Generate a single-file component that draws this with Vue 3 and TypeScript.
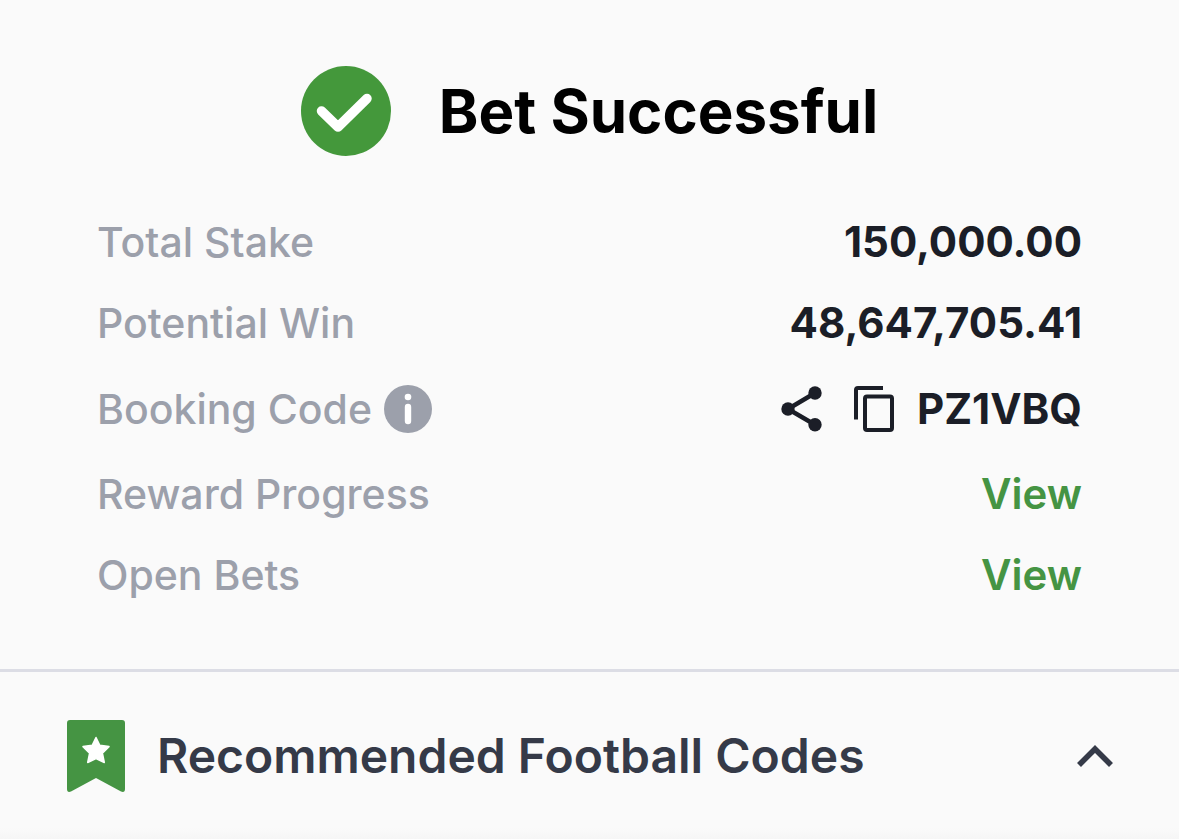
<script setup lang="ts">
interface Row {
  label: string
  value: string
  kind: 'text' | 'code' | 'link'
}

const rows: Row[] = [
  { label: 'Total Stake', value: '150,000.00', kind: 'text' },
  { label: 'Potential Win', value: '48,647,705.41', kind: 'text' },
  { label: 'Booking Code', value: 'PZ1VBQ', kind: 'code' },
  { label: 'Reward Progress', value: 'View', kind: 'link' },
  { label: 'Open Bets', value: 'View', kind: 'link' },
]
</script>

<template>
  <main class="page">
    <header class="title">
      <svg class="check" viewBox="0 0 90 90" aria-hidden="true">
        <circle cx="45" cy="45" r="45" fill="#44983b" />
        <path d="M20.5 45L37 61l29-28.500" fill="none" stroke="#fff" stroke-width="9.500" stroke-linecap="round" stroke-linejoin="round" />
      </svg>
      <h1>Bet Successful</h1>
    </header>

    <dl class="rows">
      <div v-for="row in rows" :key="row.label" class="row" :class="row.kind">
        <dt>
          {{ row.label }}
          <button v-if="row.kind === 'code'" class="icon" type="button" aria-label="About booking codes">
            <svg width="48" height="48" viewBox="0 0 48 48">
              <circle cx="24" cy="24" r="24" fill="#9ca0ab" />
              <circle cx="24" cy="12" r="3.3" fill="#fff" />
              <path d="M24 22v14" fill="none" stroke="#fff" stroke-width="6.400" stroke-linecap="round" />
            </svg>
          </button>
        </dt>
        <dd>
          <template v-if="row.kind === 'code'">
            <button class="icon" type="button" aria-label="Share">
              <svg width="42" height="48" viewBox="0 0 42 48">
                <path d="M34 8L7 24l27 15.700" fill="none" stroke="#1b1e27" stroke-width="4.500" />
                <circle cx="34" cy="8" r="6.700" fill="#1b1e27" />
                <circle cx="7" cy="24" r="6.700" fill="#1b1e27" />
                <circle cx="34" cy="39.700" r="6.700" fill="#1b1e27" />
              </svg>
            </button>
            <button class="icon copy" type="button" aria-label="Copy">
              <svg width="42" height="48" viewBox="0 0 42 48">
                <path d="M3 34.500V5q0-2 2-2h25" fill="none" stroke="#1b1e27" stroke-width="4" />
                <rect x="12" y="11.500" width="27" height="33.500" rx="2" fill="none" stroke="#1b1e27" stroke-width="4" />
              </svg>
            </button>
          </template>
          <a v-if="row.kind === 'link'" href="#">{{ row.value }}</a>
          <span v-else>{{ row.value }}</span>
        </dd>
      </div>
    </dl>

    <section class="codes">
      <svg width="58" height="72" viewBox="0 0 58 72" aria-hidden="true">
        <path d="M3 0h52q3 0 3 3v66q0 4-4 2.600L29 58 4 71.600Q0 73 0 69V3q0-3 3-3z" fill="#459443" />
        <path d="M29 17.500l3.800 7.800 9.200 1.300-6.600 6.500 1.900 9.400L29 38.600l-8.300 3.900 1.900-9.400-6.600-6.500 9.200-1.300z" fill="#fff" stroke="#fff" stroke-width="1.500" stroke-linejoin="round" />
      </svg>
      <h2>Recommended Football Codes</h2>
      <button class="icon" type="button" aria-label="Collapse" aria-expanded="true">
        <svg width="36" height="24" viewBox="0 0 36 24">
          <path d="M2 21L18 5l16 16" fill="none" stroke="#353a48" stroke-width="5.600" />
        </svg>
      </button>
    </section>
    <div class="shade"></div>
  </main>
</template>

<style>
body {
  background: #fafafa;
}
</style>

<style scoped>
.page {
  font-family: Inter, "Liberation Sans", sans-serif;
  padding-top: 66px;
}
.title {
  display: flex;
  align-items: center;
  justify-content: center;
  gap: 48px;
}
.check {
  width: 90px;
  height: 90px;
}
h1 {
  margin: 0;
  font-size: 60px;
  line-height: 72px;
  font-weight: 700;
  color: #000;
}
.rows {
  margin: 0;
  padding: 56px 97px 64px;
  display: grid;
  gap: 21px;
}
.row {
  display: flex;
  align-items: center;
  justify-content: space-between;
  font-size: 42px;
  line-height: 60px;
}
.row.code {
  min-height: 69px;
}
dt {
  display: flex;
  align-items: center;
  gap: 12px;
  color: #9ca0ab;
  font-size: 41px;
  font-weight: 500;
}
dd {
  margin: 0;
  display: flex;
  align-items: center;
  color: #1b1e27;
  font-weight: 700;
}
a {
  color: #459443;
  font-weight: 600;
  text-decoration: none;
}
.icon {
  display: flex;
  padding: 0;
  border: 0;
  background: none;
}
.copy {
  margin: 0 22px 0 30px;
}
.codes {
  display: flex;
  align-items: center;
  border-top: 3px solid #dcdde5;
  padding: 48px 66px 36px 67px;
}
h2 {
  flex: 1;
  margin: 0 0 0 32px;
  font-size: 48px;
  line-height: 60px;
  font-weight: 600;
  color: #353a48;
}
.shade {
  height: 11px;
  background: linear-gradient(#fafafa, #f6f6f6);
}
</style>
